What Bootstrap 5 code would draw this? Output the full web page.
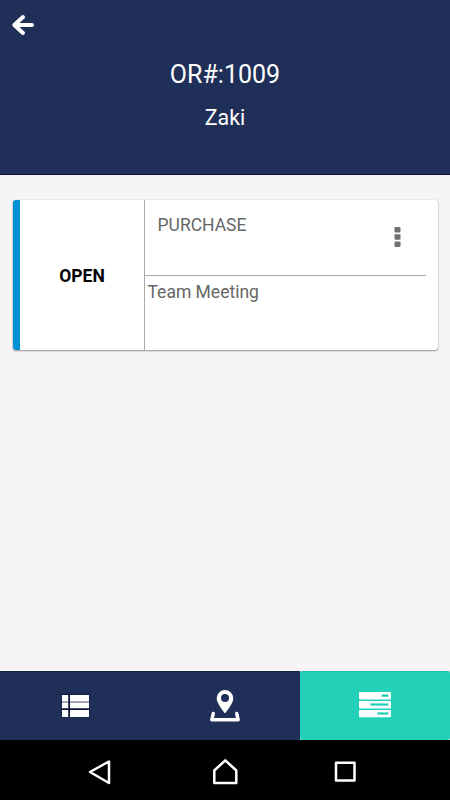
<!DOCTYPE html>
<html lang="en">
<head>
<meta charset="utf-8">
<meta name="viewport" content="width=device-width, initial-scale=1">
<title>OR#:1009</title>
<link href="https://cdn.jsdelivr.net/npm/bootstrap@5.3.0/dist/css/bootstrap.min.css" rel="stylesheet">
<style>
body{font-family:Roboto,"Liberation Sans",sans-serif;background:#f6f4f5;height:100vh;overflow:hidden}
svg{display:block}
.app-head{height:175px;background:#1f2f57;border-bottom:1px solid #070d35}
.back-btn{width:46px;height:50px}
.order-no{font-size:25px;line-height:30px;margin-top:10px}
.person{font-size:21.4px;line-height:26px;margin-top:15px}
.order-card{height:150px;margin:25px 12.5px 0;border-radius:3px;box-shadow:0 1px 2px rgba(0,0,0,.38),0 0 1px rgba(0,0,0,.25);font-size:17.5px;line-height:22px;color:#666}
.status{width:132px;border-left:7.5px solid #0090d5;border-right:1px solid #a9a9a9;color:#000;padding-top:2px;padding-left:1px}
.order-top{height:76px;margin-right:11.5px;border-bottom:1px solid #a9a9a9;padding:14px 25.5px 0 13px}
.menu-btn{margin-top:13px}
.note{padding:5px 3px}
.tabs{height:69px}
.tab-btn{width:150px;background:#1f2f57;border-top:1px solid #122449}
.tab-btn.active{background:#23d1b9;border-color:#1bbca9;border-radius:2px}
.sys-nav{height:60px;background:#000}
</style>
<script src="https://cdn.jsdelivr.net/npm/bootstrap@5.3.0/dist/js/bootstrap.bundle.min.js"></script>
</head>
<body class="d-flex flex-column">
<header class="app-head text-white text-center flex-shrink-0">
  <a href="#" class="back-btn d-flex" aria-label="Back">
    <svg width="46" height="50" fill="none" stroke="#fff" stroke-width="4" stroke-linecap="round" stroke-linejoin="round"><path d="M23 17l-8.700 8 8.700 8M15 25h17"/></svg>
  </a>
  <h1 class="order-no fw-normal mb-0">OR#:1009</h1>
  <p class="person mb-0">Zaki</p>
</header>
<main class="flex-grow-1">
  <article class="order-card bg-white d-flex overflow-hidden">
    <div class="status d-flex align-items-center justify-content-center fw-bold flex-shrink-0">OPEN</div>
    <div class="flex-grow-1">
      <div class="order-top d-flex justify-content-between align-items-start">
        <span>PURCHASE</span>
        <a href="#" class="menu-btn" aria-label="Options"><svg width="7" height="21" fill="#707070"><rect x=".5" y="0" width="6" height="5.500" rx="1"/><rect x=".5" y="7.200" width="6" height="5.500" rx="1"/><rect x=".5" y="14.400" width="6" height="5.500" rx="1"/></svg></a>
      </div>
      <div class="note">Team Meeting</div>
    </div>
  </article>
</main>
<nav class="tabs d-flex flex-shrink-0">
  <a href="#" class="tab-btn" aria-label="List"><svg width="150" height="68"><path fill="#15244b" d="M61 21.500h29v24H61z"/><path fill="#fff" d="M62 23h6.500v6H62zM70 23h19v6H70zM62 30.500h6.500v6H62zM70 30.500h19v6H70zM62 38h6.500v7H62zM70 38h19v7H70z"/><path fill="#a9aec1" d="M62 29h6.500v1.500H62zM70 29h19v1.500H70z"/><path fill="#0a1130" d="M68.500 23H70v22h-1.500zM62 36.500h27V38H62z"/></svg></a>
  <a href="#" class="tab-btn" aria-label="Map"><svg width="150" height="68"><path fill="#fff" fill-rule="evenodd" d="M75 18a8.300 8.300 0 0 1 8.300 8.300c0 4.200-4.300 10.200-8.300 15.200-4-5-8.300-11-8.300-15.200A8.300 8.300 0 0 1 75 18zm0 4a4 4 0 1 0 0 8 4 4 0 0 0 0-8z"/><path fill="none" stroke="#fff" stroke-width="3.400" stroke-linecap="round" stroke-linejoin="round" d="M63.300 41.500l-1.500 6.300h26.400l-1.500-6.300"/></svg></a>
  <a href="#" class="tab-btn active" aria-label="Tasks"><svg width="150" height="68"><g fill="#fff"><rect x="59" y="20" width="32" height="7.500" rx="1"/><rect x="59" y="29" width="32" height="7.500" rx="1"/><rect x="59" y="38" width="32" height="7.200" rx="1"/></g><path fill="#a5eae0" d="M81.500 22h7v3h-7zM70 31h18.500v3H70zM77 40h11.500v3H77z"/><path fill="#12cdb3" d="M82 22.700h6v1.800h-6zM71 31.700h17v1.600H71zM78 40.700h10v1.600H78z"/></svg></a>
</nav>
<footer class="sys-nav flex-shrink-0">
  <svg width="450" height="60" fill="none" stroke="#fff" stroke-width="2.500" stroke-linejoin="round"><path d="M109 21.500v21.500L90 32zM214.300 43V30.500l11-10.200 11 10.200V43zM336 22.700h18.500v17.800H336z"/></svg>
</footer>
</body>
</html>
